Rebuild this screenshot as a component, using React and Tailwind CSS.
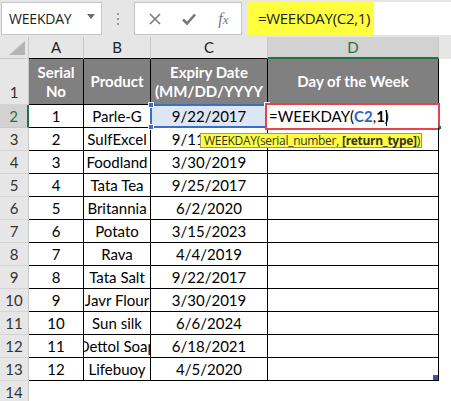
import React from "react";

const rows = [
  ["1", "Parle-G", "9/22/2017"],
  ["2", "SulfExcel", "9/11/2018"],
  ["3", "Foodland", "3/30/2019"],
  ["4", "Tata Tea", "9/25/2017"],
  ["5", "Britannia", "6/2/2020"],
  ["6", "Potato", "3/15/2023"],
  ["7", "Rava", "4/4/2019"],
  ["8", "Tata Salt", "9/22/2017"],
  ["9", "Javr Flour", "3/30/2019"],
  ["10", "Sun silk", "6/6/2024"],
  ["11", "Dettol Soap", "6/18/2021"],
  ["12", "Lifebuoy", "4/5/2020"],
];

function RowHead({ n, selected }) {
  return (
    <div
      className={
        selected
          ? "bg-[#d2d2d2] border-r-2 border-r-[#217346] border-b border-b-[#c8c8c8] flex items-center justify-center text-[15px] text-[#217346]"
          : "bg-[#e6e6e6] border-r border-r-[#c8c8c8] border-b border-b-[#d4d4d4] flex items-center justify-center text-[15px] text-[#333]"
      }
    >
      {n}
    </div>
  );
}

export default function App() {
  return (
    <div className="relative w-[451px] h-[401px] overflow-hidden bg-white font-['Lato','Liberation_Sans',sans-serif] text-black">
      {/* Formula bar */}
      <div className="h-[37px] bg-[#e6e6e6] flex items-start pt-[2px] pl-[1px]">
        <div className="w-[101px] h-[33px] bg-white border border-[#c6c6c6] flex items-center pl-[7px] pr-[6px] justify-between">
          <span className="text-[14px] text-[#222] font-['Open_Sans','Liberation_Sans',sans-serif] tracking-[-0.2px]">WEEKDAY</span>
          <svg width="8" height="5" viewBox="0 0 8 5" className="mb-[4px]">
            <polygon points="0,0 8,0 4,5" fill="#6d6d6d" />
          </svg>
        </div>
        <div className="w-[32px] h-[33px] flex flex-col items-center justify-center gap-[3px]">
          <div className="w-[2px] h-[2px] bg-[#9a9a9a]" />
          <div className="w-[2px] h-[2px] bg-[#9a9a9a]" />
          <div className="w-[2px] h-[2px] bg-[#9a9a9a]" />
        </div>
        <div className="w-[108px] h-[33px] bg-white border border-[#c6c6c6] flex items-center">
          <div className="w-[36px] flex justify-center pl-[4px]">
            <svg width="12" height="12" viewBox="0 0 12 12">
              <path d="M1 1 L11 11 M11 1 L1 11" stroke="#777" strokeWidth="1.5" />
            </svg>
          </div>
          <div className="w-[36px] flex justify-center pl-[2px]">
            <svg width="14" height="12" viewBox="0 0 14 12">
              <path d="M1 6.5 L5 10.5 L13 1.5" stroke="#777" strokeWidth="2.6" fill="none" />
            </svg>
          </div>
          <div className="w-[36px] flex justify-center">
            <span className="font-['Liberation_Serif',serif] italic text-[16px] text-[#777] leading-none">
              f<span className="text-[13px]">x</span>
            </span>
          </div>
        </div>
        <div className="ml-[5px] flex-1 h-[33px] bg-white flex">
          <div className="w-[127px] h-full bg-[#ffff40] flex items-center pl-[11px] text-[15px] text-[#222] font-['Open_Sans','Liberation_Sans',sans-serif] tracking-[-0.3px]">
            =WEEKDAY(C2,1)
          </div>
        </div>
      </div>

      {/* Sheet grid */}
      <div className="grid grid-cols-[29px_55px_67px_117px_171px_12px] grid-rows-[22px_46px_repeat(13,23px)_23px]">
        {/* column header row */}
        <div className="relative bg-[#e6e6e6] border-r border-r-[#c8c8c8] border-b border-b-[#c8c8c8]">
          <svg width="16" height="14" viewBox="0 0 16 14" className="absolute right-[3px] bottom-[3px]">
            <polygon points="16,0 16,14 0,14" fill="#b5b5b5" />
          </svg>
        </div>
        <div className="bg-[#e6e6e6] border-r border-r-[#c8c8c8] border-b border-b-black flex items-center justify-center text-[15px] text-[#222]">A</div>
        <div className="bg-[#e6e6e6] border-r border-r-[#c8c8c8] border-b border-b-black flex items-center justify-center text-[15px] text-[#222]">B</div>
        <div className="bg-[#e6e6e6] border-r border-r-[#c8c8c8] border-b border-b-black flex items-center justify-center text-[15px] text-[#222]">C</div>
        <div className="bg-[#d2d2d2] border-r border-r-[#c8c8c8] border-b-2 border-b-[#217346] flex items-center justify-center text-[15px] text-[#217346]">D</div>
        <div className="bg-[#e6e6e6]" />

        {/* row 1 header */}
        <div className="bg-[#e6e6e6] border-r border-r-[#c8c8c8] border-b border-b-[#d4d4d4] flex items-end justify-center pb-[1px] text-[15px] text-[#333]">1</div>
        <div className="bg-[#808080] border-r border-b border-black flex flex-col items-center justify-center text-white font-bold text-[15px] leading-[19px]">
          <span>Serial</span>
          <span>No</span>
        </div>
        <div className="bg-[#808080] border-r border-b border-black flex items-center justify-center text-white font-bold text-[15px]">Product</div>
        <div className="bg-[#808080] border-r border-b border-black flex flex-col items-center justify-center text-white font-bold text-[15px] leading-[19px] overflow-hidden whitespace-nowrap">
          <span>Expiry Date</span>
          <span>(MM/DD/YYYY</span>
        </div>
        <div className="bg-[#808080] border-r border-b border-black flex items-center justify-center text-white font-bold text-[15px]">Day of the Week</div>
        <div />

        {rows.map((r, i) => {
          const n = i + 2;
          const first = i === 0;
          return (
            <React.Fragment key={n}>
              <RowHead n={n} selected={first} />
              <div className="border-r border-b border-black flex items-center justify-center text-[15px]">{r[0]}</div>
              <div className="border-r border-b border-black flex items-center justify-center text-[15px] overflow-hidden whitespace-nowrap">
                <span className="shrink-0">{r[1]}</span>
              </div>
              {first ? (
                <div className="relative bg-[#dce6f5] border-r border-b border-black flex items-center justify-center text-[15px]">
                  {r[2]}
                  <div className="absolute left-[-1px] top-[-1px] right-[-1px] bottom-[-1px] border-2 border-[#3b6fc5]" />
                  <div className="absolute left-[-3px] top-[-3px] w-[6px] h-[6px] bg-[#3b6fc5] border border-white" />
                  <div className="absolute left-[-3px] bottom-[-3px] w-[6px] h-[6px] bg-[#3b6fc5] border border-white" />
                  <div className="absolute right-[-3px] top-[-3px] w-[6px] h-[6px] bg-[#3b6fc5] border border-white" />
                </div>
              ) : (
                <div className="border-r border-b border-black flex items-center justify-center text-[15px]">{r[2]}</div>
              )}
              {first ? (
                <div className="relative border-r border-b border-black flex items-center pl-[1px] text-[15px] whitespace-nowrap">
                  <div className="absolute left-[-3px] top-[-2px] w-[175px] h-[27px] border-2 border-[#e8424a] bg-white" />
                  <span className="relative">
                    =WEEKDAY(<span className="font-bold text-[#2f62c8]">C2</span>,<span className="font-bold">1</span>
                    <span className="inline-block w-[1px] h-[16px] bg-black align-middle ml-[1px] mr-[-2px]" />)
                  </span>
                  <div className="absolute right-[-3px] bottom-[-2px] w-[3px] h-[3px] bg-[#217346]" />
                </div>
              ) : (
                <div className="relative border-r border-b border-black">
                  {n === 13 && <div className="absolute right-0 bottom-0 w-[5px] h-[5px] bg-[#3a55a8]" />}
                </div>
              )}
              <div />
            </React.Fragment>
          );
        })}

        {/* row 14 */}
        <RowHead n={14} />
        <div />
        <div />
        <div />
        <div />
        <div />
      </div>

      {/* Function tooltip */}
      <div className="absolute left-[200px] top-[133px] w-[222px] h-[15px] bg-[#ffff40] border border-[#9a9a6a] flex items-center pl-[3px] text-[12px] leading-none text-[#333] whitespace-nowrap font-['Open_Sans','Liberation_Sans',sans-serif] tracking-[-0.3px]">
        WEEKDAY(serial_number, <span className="font-bold ml-[3px]">[return_type]</span>)
      </div>
    </div>
  );
}
